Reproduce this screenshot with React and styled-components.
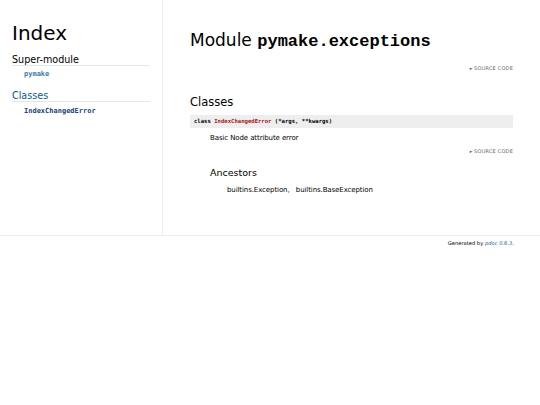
import React from "react";
import styled, { createGlobalStyle } from "styled-components";

const GlobalStyle = createGlobalStyle`
  html, body {
    margin: 0;
    padding: 0;
    background: #fff;
  }
  body {
    font-family: "DejaVu Sans", "Liberation Sans", sans-serif;
    color: #000;
  }
`;

const Page = styled.div`
  width: 540px;
`;

const Main = styled.div`
  display: flex;
`;

const Sidebar = styled.nav`
  width: 150px;
  height: 235px;
  padding-left: 12px;
  box-sizing: content-box;
  border-right: 1px solid #eee;
  flex-shrink: 0;
`;

const IndexTitle = styled.h1`
  margin: 0;
  padding-top: 21px;
  font-size: 20px;
  font-weight: normal;
  line-height: 24px;
`;

const NavHeading = styled.h3`
  margin: ${(p) => p.$top}px 0 0;
  font-size: 9.6px;
  font-weight: normal;
  line-height: 10px;
  color: ${(p) => (p.$link ? "#0b5a8c" : "#000")};
  border-bottom: 1px solid #e6e6e6;
  width: 138px;
`;

const NavItem = styled.div`
  margin: ${(p) => p.$top}px 0 0 12px;
  font-family: "DejaVu Sans Mono", monospace;
  font-weight: bold;
  font-size: 7px;
  line-height: 10px;
  color: ${(p) => p.$color};
`;

const Content = styled.article`
  flex: 1;
  padding: 0 27px;
`;

const ModuleTitle = styled.h1`
  margin: 0;
  padding-top: 28px;
  font-size: 17px;
  font-weight: normal;
  line-height: 24px;
`;

const ModuleName = styled.span`
  font-family: "Liberation Mono", monospace;
  font-weight: bold;
  font-size: 17px;
`;

const SourceToggle = styled.div`
  text-align: right;
  font-size: 5px;
  letter-spacing: 0.2px;
  color: #666;
  margin-top: ${(p) => p.$top}px;
  line-height: 8px;
`;

const SectionTitle = styled.h2`
  margin: 22px 0 0;
  font-size: 11.5px;
  font-weight: normal;
  line-height: 16px;
`;

const Signature = styled.div`
  margin-top: 5px;
  background: #eee;
  padding: 2px 4px;
  font-family: "DejaVu Sans Mono", monospace;
  font-weight: bold;
  font-size: 5.6px;
  line-height: 9px;
`;

const ClassName = styled.span`
  color: #a6161a;
`;

const Docstring = styled.p`
  margin: 5px 0 0 20px;
  font-size: 7px;
  letter-spacing: -0.1px;
  line-height: 10px;
`;

const Indented = styled.div`
  margin-left: 20px;
`;

const SubTitle = styled.h3`
  margin: 11px 0 0;
  font-size: 9.5px;
  font-weight: normal;
  line-height: 14px;
`;

const AncestorList = styled.div`
  margin: 5px 0 0 17px;
  font-size: 7px;
  letter-spacing: -0.1px;
  line-height: 10px;
  word-spacing: 1px;
`;

const Footer = styled.footer`
  border-top: 1px solid #eee;
  text-align: right;
  padding: 3px 26px 0 0;
  font-size: 5.2px;
  line-height: 8px;
`;

const PdocLink = styled.span`
  color: #1d5f95;
  font-style: italic;
`;

export default function App() {
  return (
    <Page>
      <GlobalStyle />
      <Main>
        <Sidebar>
          <IndexTitle>Index</IndexTitle>
          <NavHeading $top={10}>Super-module</NavHeading>
          <NavItem $top={3} $color="#3b7bab">pymake</NavItem>
          <NavHeading $top={12} $link>Classes</NavHeading>
          <NavItem $top={4} $color="#19437a">IndexChangedError</NavItem>
        </Sidebar>
        <Content>
          <ModuleTitle>
            Module <ModuleName>pymake.exceptions</ModuleName>
          </ModuleTitle>
          <SourceToggle $top={10}>▸ SOURCE CODE</SourceToggle>
          <SectionTitle>Classes</SectionTitle>
          <Signature>
            class <ClassName>IndexChangedError</ClassName> (*args, **kwargs)
          </Signature>
          <Docstring>Basic Node attribute error</Docstring>
          <SourceToggle $top={4}>▸ SOURCE CODE</SourceToggle>
          <Indented>
            <SubTitle>Ancestors</SubTitle>
            <AncestorList>builtins.Exception,&nbsp;&nbsp;builtins.BaseException</AncestorList>
          </Indented>
        </Content>
      </Main>
      <Footer>
        Generated by <PdocLink>pdoc 0.6.3</PdocLink>.
      </Footer>
    </Page>
  );
}
